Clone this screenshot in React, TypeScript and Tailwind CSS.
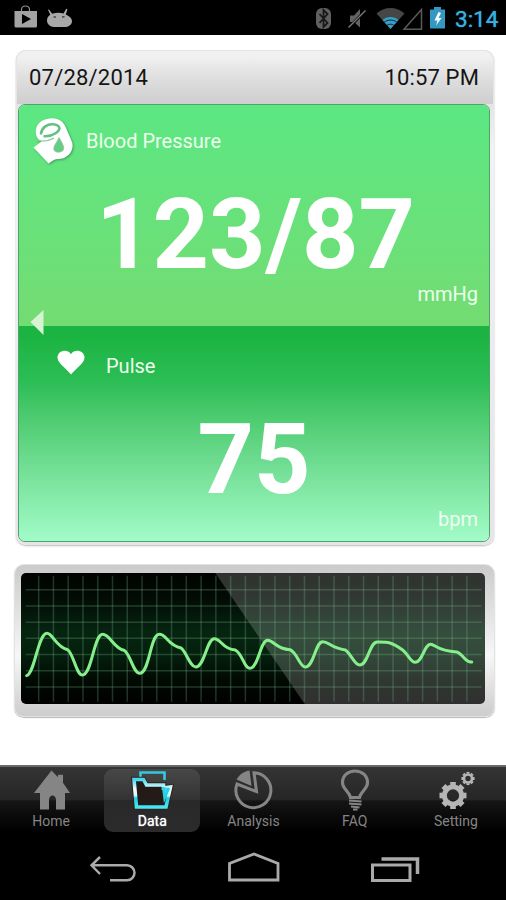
import type { ReactNode } from "react";
import clsx from "clsx";

type Tab = {
  label: string;
  icon: ReactNode;
  active?: boolean;
};

// status bar icons
const StatusLeft = () => (
  <svg width="72" height="35" viewBox="0 0 72 35">
    <path d="M21.5 11V9.500a4 3.500 0 0 1 8 0V11" fill="none" stroke="#8f8f8f" strokeWidth="1.200" />
    <path d="M14.500 11h22.500v15q0 1.500-1.500 1.500h-19.500q-1.500 0-1.500-1.500z" fill="#a3a3a3" />
    <path d="M22 14l9 5-9 5z" fill="#000" />
    <path
      d="M49 9.500l3.200 4.200c4-1.200 8-1.200 11.300-.2l2.700-4.800 1.200.6-1.600 5.200c4 1.700 6.200 4 6.200 6.500 0 3.500-3 6-7 6H54c-4 0-7-3-7-6.500 0-3 1.500-4.800 3.300-5.800L48 9.800z"
      fill="#a8a8a8"
    />
    <path d="M53.500 16.800l2.500.4M62 17.200l2.500-.6" stroke="#333" strokeWidth="1.300" />
  </svg>
);

const StatusRight = () => (
  <svg width="140" height="35" viewBox="310 0 140 35">
    <rect x="316" y="8" width="15" height="21" rx="6" fill="#606060" />
    <path d="M319.500 14l8 9-4 4V10l4 4-8 9" fill="none" stroke="#181818" strokeWidth="1.800" />
    <path d="M350 15.500h4l6-6.500v18.500l-6-5.500h-4z" fill="#636363" />
    <path d="M348.500 28L365.500 10.500" stroke="#000" strokeWidth="2.800" />
    <path d="M348.500 27.500L365.500 10.500" stroke="#777" strokeWidth="1.400" />
    <path d="M376.500 13.500c7.500-7.500 20.500-7.500 28 0L390.500 29z" fill="#464646" />
    <path d="M382.500 20c4.500-4 11.500-4 16 0l-8 9z" fill="#35a0cc" />
    <path d="M384 22.300c4-3 9-3 13 0M387 25.300c2-1.500 5-1.500 7 0" fill="none" stroke="#222" strokeWidth="1" />
    <path d="M404 29.300L421.500 9.500v19.800z" fill="none" stroke="#5a5a5a" strokeWidth="1.500" />
    <path d="M434 7h7v2.500h4V28.500h-15V9.500h4z" fill="#3399c2" />
    <path d="M438.500 12l-4 8.500h3l-1.500 5 5.500-7.500h-3l2.500-5z" fill="#fff" />
  </svg>
);

const CuffIcon = () => (
  <svg width="44" height="52" viewBox="0 0 44 52" className="drop-shadow-[1px_1px_1px_rgba(40,110,60,0.6)]">
    <path
      d="M4 19C2.500 9 10 3.500 20.500 3.300c7 0 11.500 4.200 13.800 10.200l5.800 13.700c2 6.500-2.100 13.800-8.600 16-4 1-7 .3-9.700 1.800L16.500 48.500 1.500 32.500l8-6c-3-1.500-5-4-5.500-7.500z"
      fill="#fff"
    />
    <path
      d="M9 18.500C10 12 15.500 9 21 9.300c7 .5 8.500 5 3 8.700-3.500 2.300-7 3.500-11.500 3.200"
      fill="none"
      stroke="#62c183"
      strokeWidth="2.600"
      strokeLinecap="round"
    />
    <path d="M4.500 24.500c5 2.300 12 1.500 17.500-1.300" fill="none" stroke="#8fd0a3" strokeWidth="1.300" />
    <path d="M27 22.500c2.500 4.500 4.700 7.500 4.700 11 0 4.300-9.900 5.300-9.900.3 0-3.500 3-6 5.200-11.300z" fill="#62cf84" stroke="#97b9a2" strokeWidth=".8" />
  </svg>
);

const HeartIcon = () => (
  <svg width="28" height="25" viewBox="0 0 28 25">
    <path d="M14 24.500C9 18 .5 13.500.5 7.500.5 1 10 -2 14 4.200 18-2 27.500 1 27.500 7.500c0 6-8.500 10.500-13.500 17z" fill="#fff" />
  </svg>
);

// tab icons
const HomeIcon = () => (
  <svg width="40" height="42" viewBox="0 0 40 42">
    <path d="M20.500 1.500l6.500 6.700V5.800h5v8L39 24h-5v16.500h-9V31c0-6-7-6-7 0v9.500H9V24H3z" fill="#858585" />
  </svg>
);

const DataIcon = () => (
  <svg width="44" height="42" viewBox="0 0 44 42">
    <defs>
      <linearGradient id="folder" x1="0" y1="0" x2="0" y2="1">
        <stop offset="0" stopColor="#42d9ee" />
        <stop offset=".35" stopColor="#f0ffff" />
        <stop offset=".58" stopColor="#d4faff" />
        <stop offset=".68" stopColor="#1fcfe6" />
        <stop offset="1" stopColor="#45e7f5" />
      </linearGradient>
    </defs>
    <path d="M10.500 9V3.500h24V11" fill="none" stroke="#35c9df" strokeWidth="2.600" />
    <path d="M6.500 38L4 10.500h9.500l3 5.500h17v3l7-1-4.500 20z" fill="#2a1510" stroke="#3a1c12" strokeWidth="5.500" />
    <path d="M6.500 38L4 10.500h9.500l3 5.500h17v3l7-1-4.500 20z" fill="#241b19" stroke="url(#folder)" strokeWidth="3.600" />
    <path d="M33 18l1.500 12L39 19" fill="#30dced" stroke="#28cfe2" strokeWidth="2.200" />
  </svg>
);

const AnalysisIcon = () => (
  <svg width="42" height="42" viewBox="0 0 42 42">
    <path d="M22 3.700A17.500 17.500 0 1 1 5 15L24.500 22.500z" fill="none" stroke="#858585" strokeWidth="3" />
    <path d="M4.500 10.500C7.500 5.500 12.500 2 17.500 1.500l2 15.500z" fill="#858585" />
  </svg>
);

const FaqIcon = () => (
  <svg width="30" height="42" viewBox="0 0 30 42">
    <path
      d="M10.500 28.500C9 22 2.500 20 2.500 13.500 2.500 6.500 8 2 15 2s12.500 4.500 12.500 11.500c0 6.500-6.500 8.500-8 15z"
      fill="none"
      stroke="#858585"
      strokeWidth="3.200"
    />
    <path d="M9 31.500l12.500 1M9 34.500l12.500 1M11 37.500l8.500 1M13 40.500h4.500" stroke="#858585" strokeWidth="2.200" />
  </svg>
);

const Gear = ({ cx, cy, r, width }: { cx: number; cy: number; r: number; width: number }) => (
  <g fill="none" stroke="#b5b5b5">
    <circle cx={cx} cy={cy} r={r} strokeWidth={width} />
    {[0, 45, 90, 135, 180, 225, 270, 315].map((deg) => (
      <path
        key={deg}
        d={`M${cx} ${cy - r - width / 3}V${cy - r - width}`}
        strokeWidth={width * 1.150}
        transform={`rotate(${deg} ${cx} ${cy})`}
      />
    ))}
  </g>
);

const SettingIcon = () => (
  <svg width="42" height="42" viewBox="0 0 42 42">
    <Gear cx={18} cy={26.500} r={8.600} width={4.900} />
    <Gear cx={33} cy={9.500} r={4} width={2.600} />
  </svg>
);

const tabs: Tab[] = [
  { label: "Home", icon: <HomeIcon /> },
  { label: "Data", icon: <DataIcon />, active: true },
  { label: "Analysis", icon: <AnalysisIcon /> },
  { label: "FAQ", icon: <FaqIcon /> },
  { label: "Setting", icon: <SettingIcon /> },
];

// pulse monitor
const columns = Array.from({ length: 30 }, (_, i) => 53 + i * 44.300);
const rows = Array.from({ length: 7 }, (_, i) => 50 + i * 48.700);

const PulseWave = () => (
  <svg width="464" height="131" viewBox="0 0 1392 393" className="block">
    <defs>
      <linearGradient id="screen" x1="0" y1="0" x2="0" y2="1">
        <stop offset="0" stopColor="#000301" />
        <stop offset=".2" stopColor="#020c05" />
        <stop offset=".45" stopColor="#062511" />
        <stop offset=".62" stopColor="#04200d" />
        <stop offset=".82" stopColor="#010a03" />
        <stop offset="1" stopColor="#000" />
      </linearGradient>
    </defs>
    <rect width="1392" height="393" fill="url(#screen)" />
    <path d="M583 0H1392V393H851z" fill="#fff" fillOpacity=".19" />
    <g stroke="#7cba91" strokeOpacity=".27" strokeWidth="4.500">
      {columns.map((x) => (
        <path key={x} d={`M${x} 8V386`} />
      ))}
      {rows.map((y) => (
        <path key={y} d={`M14 ${y}H1382`} />
      ))}
    </g>
    <path
      transform="translate(-63 -54)"
      d="M80 362C104 356 114 235 141 235C158 235 168 276 203 284C221 298 229 360 247 360C276 360 281 238 308 238C330 238 340 279 372 286C392 298 400 355 419 355C449 355 450 238 478 238C500 238 503 271 543 279C559 290 570 336 587 336C614 336 620 251 643 251C664 251 665 282 706 285C727 296 733 340 749 340C776 340 780 256 803 256C822 256 827 282 870 284C892 294 900 336 916 336C942 336 946 260 968 260C987 260 992 279 1036 285C1054 297 1063 330 1079 330C1104 330 1108 261 1132 261C1165 261 1172 260 1208 285C1224 297 1232 322 1245 322C1268 322 1272 268 1292 268C1305 268 1312 288 1370 291C1390 297 1396 324 1415 321"
      fill="none"
      stroke="#85f08b"
      strokeWidth="9"
      strokeLinecap="round"
      strokeLinejoin="round"
    />
  </svg>
);

const App = () => {
  return (
    <div className="flex flex-col w-[506px] h-[900px] bg-white overflow-hidden select-none font-['Roboto',sans-serif]">
      <div className="flex items-center h-[35px] shrink-0 bg-black">
        <StatusLeft />
        <div className="ml-[238px]">
          <StatusRight />
        </div>
        <span className="ml-[5px] mt-[3px] text-[22.500px] leading-none text-[#35b0e0] [text-shadow:0_0_1px_#35b0e0]">
          3:14
        </span>
      </div>

      <main className="flex flex-col h-[730px] shrink-0 pt-[15px]">
        <section className="ml-[16px] w-[478px] h-[495px] rounded-[10px] pl-[2px] pr-[4px] bg-linear-to-b from-[#d4d4d4] via-[#f2f1f5] via-20% to-[#e6e4e9] shadow-[0_1px_2px_#b9b9b9]">
          <div className="flex justify-between items-center h-[54px] pl-[11px] pr-[11px] -ml-[2px] -mr-[4px] rounded-t-[10px] border-x border-t border-[#e5e5e5] bg-linear-to-b from-[#f1f1f1] from-10% via-[#dfdfdf] via-50% to-[#cecece] text-[22px] leading-none text-[#151515]">
            <span className="pl-[1px] tracking-[0.2px]">07/28/2014</span>
            <span className="pr-[3px] tracking-[0.15px]">10:57 PM</span>
          </div>

          <div className="relative w-[472px] h-[438px] rounded-[7px] overflow-hidden text-white border border-[#4da568]">
            <div className="flex flex-col h-[221px] bg-linear-to-b from-[#5be783] to-[#73dc72]">
              <div className="flex items-center h-[71px] pl-[13px]">
                <CuffIcon />
                <span className="ml-[10px] text-[20px] leading-none text-[#edffed]">Blood Pressure</span>
              </div>
              <p className="pl-[3px] h-[108px] pt-[10px] text-center text-[98.500px] leading-none font-bold">123/87</p>
              <p className="pr-[11px] text-right text-[20px] leading-[21px] text-[#edffed]">mmHg</p>
            </div>
            <div className="flex flex-col h-[215px] bg-linear-to-b from-[#1bb442] from-5% via-[#2dbe57] via-27% to-[#a2fbc8]">
              <div className="flex items-center h-[73px] pl-[38px]">
                <HeartIcon />
                <span className="ml-[21px] mt-[6px] text-[20px] leading-none text-[#edffed]">Pulse</span>
              </div>
              <p className="h-[109px] pt-[12px] text-center text-[98.500px] leading-none font-bold">75</p>
              <p className="pr-[11px] text-right text-[20px] leading-[22px] text-[#edffed]">bpm</p>
            </div>
            {/* previous record */}
            <svg width="14" height="26" viewBox="0 0 14 26" className="absolute left-[11px] top-[205px]">
              <path d="M13.500 0v25L.5 12z" fill="#d6f4d3" />
            </svg>
          </div>
        </section>

        <section className="mt-[19px] ml-[14px] w-[481px] h-[153px] rounded-[10px] pt-[8px] pl-[6px] border border-[#e2e2e2] bg-linear-to-b from-[#cbcbcb] via-[#f7f7f7] via-60% to-[#cdcdcd] shadow-[0_1px_1px_#b5b5b5]">
          <div className="w-[464px] h-[131px] rounded-[5px] overflow-hidden">
            <PulseWave />
          </div>
        </section>
      </main>

      <nav className="grid grid-cols-5 h-[70px] shrink-0 pt-[2px] border-t-2 border-[#696969] bg-[linear-gradient(#343434,#262626_48%,#151515_50%,#000_95%)]">
        {tabs.map((tab) => (
          <div
            key={tab.label}
            className={clsx(
              "flex flex-col items-center ml-[3px] mr-[2px] h-[63px] rounded-[9px]",
              tab.active && "bg-[linear-gradient(#484848,#343434_48%,#292929_50%,#2b2b2b)]"
            )}
          >
            {tab.icon}
            <span
              className={clsx(
                "mt-[3px] text-[14px] leading-[14px]",
                tab.active ? "text-white [text-shadow:0_0_1px_#fff]" : "text-[#858585]"
              )}
            >
              {tab.label}
            </span>
          </div>
        ))}
      </nav>

      {/* system buttons */}
      <div className="flex justify-between items-end h-[65px] shrink-0 pl-[90px] pr-[86px] pb-[18px] bg-black">
        <svg width="47" height="26" viewBox="0 0 47 26" fill="none" stroke="#aaa" strokeWidth="2.500">
          <path d="M10 1L1.500 9.300 10 18M2 9.300h35a7.500 7.500 0 0 1 0 15H20" />
        </svg>
        <svg width="52" height="30" viewBox="0 0 52 30" fill="none" stroke="#aaa" strokeWidth="2.800">
          <path d="M1.500 28V11.500L26 2l24 9.500V28z" />
        </svg>
        <svg width="49" height="26" viewBox="0 0 49 26" fill="none" stroke="#aaa">
          <rect x="1.500" y="9" width="37.500" height="15.500" strokeWidth="3" />
          <path d="M10.500 3H46.500V18" strokeWidth="3.500" />
        </svg>
      </div>
    </div>
  );
};

export default App;
